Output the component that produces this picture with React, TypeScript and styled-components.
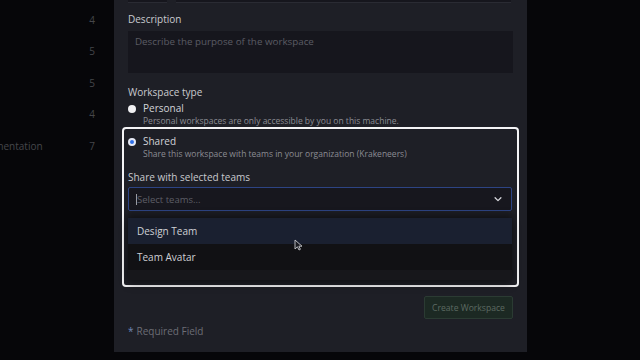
import styled, { createGlobalStyle } from "styled-components";

const GlobalStyle = createGlobalStyle`
  html, body {
    margin: 0;
    padding: 0;
    background: #060609;
    font-family: "Open Sans", "Noto Sans", sans-serif;
  }
  * { box-sizing: border-box; }
`;

const Page = styled.div`
  display: flex;
  width: 640px;
  height: 360px;
  overflow: hidden;
  background: #060609;
  position: relative;
`;

// dimmed list behind the modal
const SideList = styled.div`
  width: 114px;
  flex-shrink: 0;
  display: flex;
  flex-direction: column;
  padding-top: 4px;
`;

const SideRow = styled.div`
  display: flex;
  justify-content: space-between;
  align-items: center;
  height: 31.5px;
  padding-right: 19px;
  font-size: 10px;
  color: #45464b;
  white-space: nowrap;
  overflow: hidden;
`;

const SideName = styled.span`
  margin-left: -30px;
`;

const Modal = styled.div`
  width: 413px;
  height: 352px;
  background: #1e1f26;
  padding: 0 14px;
  display: flex;
  flex-direction: column;
`;

const TopFields = styled.div`
  display: flex;
  gap: 9px;
  margin-top: -20px;
  height: 23px;
`;

const TopInput = styled.div<{ $w?: number }>`
  ${(p) => (p.$w ? `width: ${p.$w}px;` : "flex: 1;")}
  height: 23px;
  background: #16161d;
  border-bottom: 1px solid #2a2b33;
  margin-right: ${(p) => (p.$w ? 0 : 2)}px;
`;

const Label = styled.div<{ $mt: number }>`
  margin-top: ${(p) => p.$mt}px;
  font-size: 10px;
  line-height: 14px;
  color: #c9cacf;
`;

const TextArea = styled.div`
  margin-top: 5px;
  height: 42px;
  background: #16161d;
  padding: 4px 7px;
  font-size: 9.8px;
  line-height: 14px;
  color: #5b5c64;
`;

const RadioRow = styled.div`
  display: flex;
  gap: 7px;
`;

const Radio = styled.div<{ $on?: boolean }>`
  width: 8px;
  height: 8px;
  margin-top: 4px;
  border-radius: 50%;
  flex-shrink: 0;
  background: ${(p) => (p.$on ? "#2f6fe8" : "#f0f0f2")};
  border: ${(p) => (p.$on ? "2px solid #e6e9f5" : "none")};
`;

const RadioText = styled.div`
  display: flex;
  flex-direction: column;
`;

const RadioTitle = styled.div`
  font-size: 10px;
  line-height: 14px;
  color: #d2d3d8;
`;

const RadioDesc = styled.div`
  font-size: 8.5px;
  line-height: 12px;
  color: #8b8c93;
`;

const Highlight = styled.div`
  margin: 0 -6px;
  height: 160px;
  border: 2px solid #f4f4f6;
  border-radius: 4px;
  padding: 5px 5px 0 4px;
  display: flex;
  flex-direction: column;
`;

const SelectBox = styled.div`
  margin-top: 3px;
  height: 24px;
  border: 1px solid #2d4484;
  border-radius: 2px;
  background: #17171e;
  display: flex;
  align-items: center;
  padding: 0 8px 0 7px;
  font-size: 9.5px;
  color: #5d5e66;
`;

const Caret = styled.span`
  width: 1px;
  height: 11px;
  background: #9a9ba2;
`;

const Placeholder = styled.span`
  flex: 1;
`;

const DropMenu = styled.div`
  margin-top: 7px;
  height: 62px;
  background: #17171b;
  box-shadow: 0 -4px 6px rgba(0, 0, 0, 0.35), 0 4px 8px rgba(0, 0, 0, 0.4);
  display: flex;
  flex-direction: column;
`;

const Option = styled.div<{ $active?: boolean }>`
  height: 26px;
  flex-shrink: 0;
  display: flex;
  align-items: center;
  padding-left: 9px;
  font-size: 10px;
  color: #cfd0d5;
  background: ${(p) => (p.$active ? "#1a2030" : "#111114")};
`;

const Footer = styled.div`
  margin-top: 9px;
  display: flex;
  justify-content: flex-end;
`;

const CreateButton = styled.div`
  width: 89px;
  height: 23px;
  border: 1px solid #2b3b33;
  border-radius: 2px;
  background: #1c2923;
  color: #5c6a62;
  font-size: 8.6px;
  display: flex;
  align-items: center;
  justify-content: center;
`;

const Required = styled.div`
  margin-top: 5px;
  font-size: 10px;
  line-height: 14px;
  color: #6c6d75;
`;

const Star = styled.span`
  color: #6f86b8;
  margin-right: 3px;
`;

const Pointer = styled.svg`
  position: absolute;
  left: 294px;
  top: 239px;
`;

const sideRows = [
  { name: "", count: "4" },
  { name: "", count: "5" },
  { name: "", count: "5" },
  { name: "", count: "4" },
  { name: "Documentation", count: "7" },
];

export default function App() {
  return (
    <>
      <GlobalStyle />
      <Page>
        <SideList>
          {sideRows.map((r, i) => (
            <SideRow key={i}>
              <SideName>{r.name}</SideName>
              <span>{r.count}</span>
            </SideRow>
          ))}
        </SideList>
        <Modal>
          <TopFields>
            <TopInput $w={39} />
            <TopInput />
          </TopFields>
          <Label $mt={9}>Description</Label>
          <TextArea>Describe the purpose of the workspace</TextArea>
          <Label $mt={12}>Workspace type</Label>
          <RadioRow style={{ marginTop: 2 }}>
            <Radio />
            <RadioText>
              <RadioTitle>Personal</RadioTitle>
              <RadioDesc>Personal workspaces are only accessible by you on this machine.</RadioDesc>
            </RadioText>
          </RadioRow>
          <Highlight>
            <RadioRow>
              <Radio $on />
              <RadioText>
                <RadioTitle>Shared</RadioTitle>
                <RadioDesc>Share this workspace with teams in your organization (Krakeneers)</RadioDesc>
              </RadioText>
            </RadioRow>
            <Label $mt={10}>Share with selected teams</Label>
            <SelectBox>
              <Caret />
              <Placeholder>Select teams...</Placeholder>
              <svg width="10" height="10" viewBox="0 0 24 24" fill="none" stroke="#d8d9de" strokeWidth="3" strokeLinecap="round" strokeLinejoin="round">
                <path d="M5 9l7 7 7-7" />
              </svg>
            </SelectBox>
            <DropMenu>
              <Option $active>Design Team</Option>
              <Option>Team Avatar</Option>
            </DropMenu>
          </Highlight>
          <Footer>
            <CreateButton>Create Workspace</CreateButton>
          </Footer>
          <Required>
            <Star>*</Star>Required Field
          </Required>
        </Modal>
        <Pointer width="9" height="12" viewBox="0 0 9 12">
          <path d="M1 1 L1 10 L3.4 7.8 L5 11 L6.4 10.3 L4.9 7.2 L8 7.2 Z" fill="#1b1c22" stroke="#c8c9ce" strokeWidth="0.9" strokeLinejoin="round" />
        </Pointer>
      </Page>
    </>
  );
}
